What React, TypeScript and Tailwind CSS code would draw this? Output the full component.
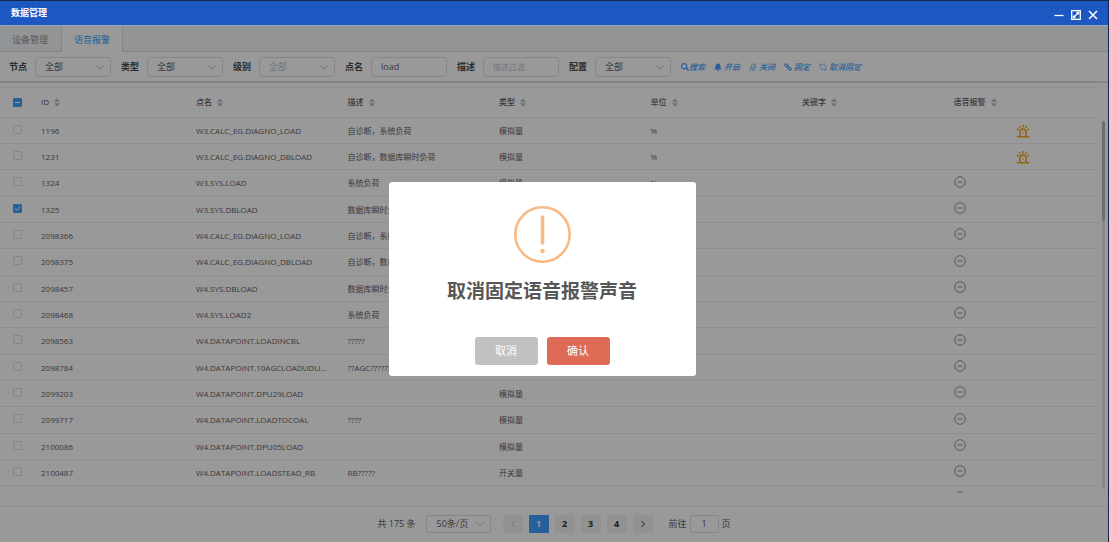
import { useState } from "react";
import { FaSearch, FaBell } from "react-icons/fa";
import { clsx } from "clsx";

const columns = ["ID", "点名", "描述", "类型", "单位", "关键字", "语音报警"];

const rows = [
  { id: "1196", name: "W3.CALC_EG.DIAGNO_LOAD", desc: "自诊断，系统负荷", type: "模拟量", unit: "%", alarm: true },
  { id: "1231", name: "W3.CALC_EG.DIAGNO_DBLOAD", desc: "自诊断，数据库瞬时负荷", type: "模拟量", unit: "%", alarm: true },
  { id: "1324", name: "W3.SYS.LOAD", desc: "系统负荷", type: "模拟量", unit: "%", alarm: false },
  { id: "1325", name: "W3.SYS.DBLOAD", desc: "数据库瞬时负荷", type: "", unit: "", alarm: false },
  { id: "2098366", name: "W4.CALC_EG.DIAGNO_LOAD", desc: "自诊断，系统负荷", type: "", unit: "", alarm: false },
  { id: "2098375", name: "W4.CALC_EG.DIAGNO_DBLOAD", desc: "自诊断，数据库瞬时负荷", type: "", unit: "", alarm: false },
  { id: "2098457", name: "W4.SYS.DBLOAD", desc: "数据库瞬时负荷", type: "", unit: "", alarm: false },
  { id: "2098468", name: "W4.SYS.LOAD2", desc: "系统负荷", type: "", unit: "", alarm: false },
  { id: "2098563", name: "W4.DATAPOINT.LOADINCBL", desc: "?????", type: "", unit: "", alarm: false },
  { id: "2098784", name: "W4.DATAPOINT.10AGCLOADUDLIMIT", desc: "??AGC??????", type: "", unit: "", alarm: false },
  { id: "2099203", name: "W4.DATAPOINT.DPU29LOAD", desc: "", type: "模拟量", unit: "", alarm: false },
  { id: "2099717", name: "W4.DATAPOINT.LOADTOCOAL", desc: "????", type: "模拟量", unit: "", alarm: false },
  { id: "2100086", name: "W4.DATAPOINT.DPU05LOAD", desc: "", type: "模拟量", unit: "", alarm: false },
  { id: "2100487", name: "W4.DATAPOINT.LOADSTEAD_RB", desc: "RB?????", type: "开关量", unit: "", alarm: false },
];

function Chevron() {
  return (
    <svg viewBox="0 0 8 8" className="pointer-events-none absolute top-1/2 right-[7px] size-2 -translate-y-1/2 fill-none stroke-[#c0c4cc]">
      <path d="M0.5 2.5 4 6 7.5 2.5" />
    </svg>
  );
}

function SortIcon() {
  return (
    <svg viewBox="0 0 6 9" className="h-[9px] w-[6px] fill-[#b4b8c0]">
      <path d="M0 3.8 3 0.6 6 3.8ZM0 5.2 3 8.4 6 5.2Z" />
    </svg>
  );
}

function SirenIcon() {
  return (
    <svg viewBox="0 0 14 14" className="mx-auto size-[14px] fill-none stroke-[#f5a31c]" strokeWidth="1.5">
      <path d="M0.8 12.8H13.2M4 12.6V8a3 3 0 0 1 6 0v4.6M7 1v2.4M3.4 2l.9 1.8M10.6 2l-.9 1.8M0.8 5.2l1.9 1M13.2 5.2l-1.9 1" />
      <path d="M7 8.2v1.4" strokeWidth="1" />
    </svg>
  );
}

function MinusCircle() {
  return (
    <svg viewBox="0 0 12 12" className="size-[12px] fill-none stroke-[#909399]">
      <circle cx="6" cy="6" r="5.3" />
      <path d="M3.5 6h5" />
    </svg>
  );
}

function BellOff() {
  return (
    <svg viewBox="0 0 10 10" className="size-2 fill-none stroke-current">
      <path d="M1 9.5 9.4 0.8M2.2 6.8 3 3.6A2.6 2.6 0 0 1 6.8 1.6M8 3.8 7.4 7.6H4M4.2 9.2h2.2M1 7.6h1.4" />
    </svg>
  );
}

function Chain() {
  return (
    <svg viewBox="0 0 10 10" className="size-2 fill-none stroke-current" strokeWidth="1.4">
      <rect x="-2.2" y="-1.4" width="4.4" height="2.8" rx="1.3" transform="translate(3 3) rotate(45)" />
      <rect x="-2.2" y="-1.4" width="4.4" height="2.8" rx="1.3" transform="translate(7 7) rotate(45)" />
    </svg>
  );
}

function Unlink() {
  return (
    <svg viewBox="0 0 10 10" className="size-2 fill-none stroke-current">
      <path d="M5 2.8 3.8 1.6a1.5 1.5 0 0 0-2.2 2.2L3 5.2M5 7.2l1.3 1.3a1.5 1.5 0 0 0 2.2-2.2L7.2 5M6.5 2.6V1M7.4 3.5H9M3.5 7.4V9M2.6 6.5H1" />
    </svg>
  );
}

function Filter({ id, label, muted }: { id: string; label: string; muted?: boolean }) {
  return (
    <div className="flex items-center gap-2">
      <label htmlFor={id} className="text-[9px] font-bold text-[#484a4e]">{label}</label>
      <div className="relative">
        <select
          id={id}
          className={clsx(
            "block h-5 w-[76px] appearance-none rounded-[3px] border border-[#dcdfe6] bg-white px-[9px] text-[9px]",
            muted ? "text-[#c0c4cc]" : "text-[#606266]",
          )}
        >
          <option>全部</option>
        </select>
        <Chevron />
      </div>
    </div>
  );
}

export default function App() {
  const [checked, setChecked] = useState<string[]>(["1325"]);
  const [name, setName] = useState("load");
  const [page, setPage] = useState(1);
  const [open, setOpen] = useState(true);

  const toggle = (id: string) =>
    setChecked(checked.includes(id) ? checked.filter((c) => c !== id) : [...checked, id]);

  return (
    <div className="flex h-screen flex-col overflow-hidden border-t border-r border-[#14264d] bg-white font-['Open_Sans','Noto_Sans_CJK_SC',sans-serif] text-[8px] text-[#606266]">
      {/* Title bar */}
      <header className="flex h-[25px] shrink-0 items-center justify-between border-b border-[#9da9c4] bg-[#1d57c2] pr-[10px] pl-[11px] text-white">
        <h1 className="text-[9px] font-bold">数据管理</h1>
        <div className="flex items-center gap-[7px] pt-1">
          <button type="button" aria-label="最小化">
            <svg viewBox="0 0 10 10" className="size-[10px] fill-none stroke-current" strokeWidth="1.3">
              <path d="M0.5 5.5h9" />
            </svg>
          </button>
          <button type="button" aria-label="最大化">
            <svg viewBox="0 0 10 10" className="size-[10px] fill-none stroke-current" strokeWidth="1.3">
              <path d="M0.7 0.7h8.6v8.6H0.7ZM5.5 2.5h2v2M7.5 2.5l-5 5M2.5 5.5v2h2" />
            </svg>
          </button>
          <button type="button" aria-label="关闭窗口">
            <svg viewBox="0 0 10 10" className="size-[10px] fill-none stroke-current" strokeWidth="1.5">
              <path d="M1 1l8 8M9 1l-8 8" />
            </svg>
          </button>
        </div>
      </header>

      <main className="relative flex min-h-0 flex-1 flex-col">
        {/* Tabs */}
        <nav className="flex h-[26px] shrink-0 border-b border-[#dcdfe6] bg-[#f5f7fa] text-[9px]">
          <button type="button" className="pt-[2px] pr-[13px] pl-3 text-[#909399]">设备管理</button>
          <button type="button" className="-mb-px border-x border-[#dcdfe6] bg-white px-3 pt-px text-[#409eff]">语音报警</button>
        </nav>

        {/* Filters */}
        <form className="flex h-[31px] shrink-0 items-center gap-[10px] border-b-2 border-[#dedede] pl-[9px]" onSubmit={(e) => e.preventDefault()}>
          <Filter id="node" label="节点" />
          <Filter id="type" label="类型" />
          <Filter id="level" label="级别" muted />
          <div className="flex items-center gap-2">
            <label htmlFor="name" className="text-[9px] font-bold text-[#484a4e]">点名</label>
            <input
              id="name"
              value={name}
              onChange={(e) => setName(e.target.value)}
              className="h-5 w-[76px] rounded-[3px] border border-[#dcdfe6] px-[9px] text-[9px]"
            />
          </div>
          <div className="flex items-center gap-2">
            <label htmlFor="desc" className="text-[9px] font-bold text-[#484a4e]">描述</label>
            <input
              id="desc"
              placeholder="描述过滤"
              className="h-5 w-[76px] rounded-[3px] border border-[#dcdfe6] px-[9px] text-[8px] placeholder:text-[#c0c4cc]"
            />
          </div>
          <Filter id="config" label="配置" />
          <div className="flex items-center gap-[9px] text-[8px] font-medium text-[#409eff] italic">
            <button type="submit" className="flex items-center"><FaSearch className="size-2" />搜索</button>
            <button type="button" className="flex items-center gap-[2px]"><FaBell className="size-2" />开启</button>
            <button type="button" className="flex items-center gap-[2px]"><BellOff />关闭</button>
            <button type="button" className="flex items-center gap-[2px]"><Chain />固定</button>
            <button type="button" className="flex items-center gap-[2px]" onClick={() => setOpen(true)}><Unlink />取消固定</button>
          </div>
        </form>

        {/* Table */}
        <div className="mt-1 flex min-h-0 flex-1">
          <div className="min-w-0 flex-1 overflow-hidden">
            <table className="w-full table-fixed border-collapse text-left">
              <colgroup>
                <col className="w-[35px]" />
                <col className="w-[155px]" />
                <col span={6} />
              </colgroup>
              <thead>
                <tr className="h-[30px] border-y border-[#ebeef5]">
                  <th className="pl-[13px]">
                    <button type="button" aria-label="全选" className="flex size-[9px] items-center justify-center rounded-[1px] bg-[#409eff]">
                      <span className="h-px w-[5px] bg-white" />
                    </button>
                  </th>
                  {columns.map((col) => (
                    <th key={col} className="px-[6px] pb-px font-medium text-[#606266]">
                      <span className="flex items-center gap-[5px]">{col}<SortIcon /></span>
                    </th>
                  ))}
                </tr>
              </thead>
              <tbody>
                {rows.map((row) => (
                  <tr key={row.id} className="h-[26px] border-b border-[#ebeef5] nth-[3n]:h-[27px]">
                    <td className="pb-[3px] pl-[13px]">
                      <span className="relative block size-[9px]">
                        <input
                          type="checkbox"
                          aria-label={row.id}
                          checked={checked.includes(row.id)}
                          onChange={() => toggle(row.id)}
                          className={clsx(
                            "block size-[9px] appearance-none rounded-[1px] border",
                            checked.includes(row.id) ? "border-[#409eff] bg-[#409eff]" : "border-[#dcdfe6] bg-white",
                          )}
                        />
                        {checked.includes(row.id) && (
                          <svg viewBox="0 0 9 9" className="pointer-events-none absolute inset-0 size-[9px] fill-none stroke-white">
                            <path d="M2 4.5 4 6.3 7.2 2.8" />
                          </svg>
                        )}
                      </span>
                    </td>
                    <td className="px-[6px]">{row.id}</td>
                    <td className="truncate pr-3 pl-[6px]">{row.name}</td>
                    <td className="truncate px-[6px]">{row.desc}</td>
                    <td className="px-[6px]">{row.type}</td>
                    <td className="px-[6px]">{row.unit}</td>
                    <td className="px-[6px]" />
                    <td className={clsx("px-[6px]", !row.alarm && "pb-[3px]")}>{row.alarm ? <SirenIcon /> : <MinusCircle />}</td>
                  </tr>
                ))}
                <tr className="h-[26px]">
                  <td colSpan={7} />
                  <td className="px-[6px] pb-[3px]"><MinusCircle /></td>
                </tr>
              </tbody>
            </table>
          </div>
          <div className="w-[9px] shrink-0 pt-[34px] pl-[3px]">
            <div className="h-[368px] w-[3px] rounded bg-[#e4e5e8]">
              <div className="h-[100px] rounded bg-[#b6b9c6]" />
            </div>
          </div>
        </div>

        {/* Pagination */}
        <footer className="mt-[13px] flex h-9 shrink-0 items-center justify-center border-t border-[#ebeef5] pb-[2px] text-[9px]">
          <span>共 175 条</span>
          <div className="relative ml-[10px]">
            <select aria-label="每页条数" className="block h-[18px] w-[65px] appearance-none rounded-[2px] border border-[#dcdfe6] px-[10px]">
              <option>50条/页</option>
            </select>
            <Chevron />
          </div>
          <div className="ml-3 flex gap-[6px] font-bold text-[#303133]">
            <button type="button" aria-label="上一页" className="flex h-[18px] w-5 items-center justify-center rounded-[1px] bg-[#f4f4f5] text-[#c0c4cc]">
              <svg viewBox="0 0 8 8" className="size-2 fill-none stroke-current"><path d="M5.5 1 2.5 4 5.5 7" /></svg>
            </button>
            {[1, 2, 3, 4].map((n) => (
              <button
                key={n}
                type="button"
                onClick={() => setPage(n)}
                className={clsx("h-[18px] w-5 rounded-[1px]", page === n ? "bg-[#409eff] text-white" : "bg-[#f4f4f5]")}
              >
                {n}
              </button>
            ))}
            <button type="button" aria-label="下一页" className="flex h-[18px] w-5 items-center justify-center rounded-[1px] bg-[#f4f4f5]">
              <svg viewBox="0 0 8 8" className="size-2 fill-none stroke-current"><path d="M2.5 1 5.5 4 2.5 7" /></svg>
            </button>
          </div>
          <label className="ml-4 flex items-center gap-[3px]">
            前往
            <input defaultValue="1" className="h-[18px] w-[29px] rounded-[2px] border border-[#dcdfe6] text-center" />
            页
          </label>
        </footer>

        {/* Confirm dialog */}
        {open && (
          <div className="absolute inset-0 flex items-center justify-center bg-black/40 pr-6 pb-[10px]">
            <div role="dialog" aria-labelledby="dialog-title" className="flex w-[307px] flex-col items-center rounded-[3px] bg-white pt-6 pb-[11px]">
              <svg viewBox="0 0 57 57" className="size-[57px] fill-none stroke-[#f8bb86]">
                <circle cx="28.5" cy="28.5" r="27.2" strokeWidth="2.6" />
                <path d="M28.5 11v26" strokeWidth="3.6" strokeLinecap="round" />
                <circle cx="28.5" cy="45" r="2.3" className="fill-[#f8bb86] stroke-none" />
              </svg>
              <h2 id="dialog-title" className="mt-[14px] text-[19px] leading-[28px] font-bold text-[#575757]">取消固定语音报警声音</h2>
              <div className="mt-8 flex gap-[9px] text-[11px] text-white">
                <button type="button" onClick={() => setOpen(false)} className="h-7 w-[63px] rounded-[3px] bg-[#c1c1c1]">取消</button>
                <button type="button" onClick={() => setOpen(false)} className="h-7 w-[63px] rounded-[3px] bg-[#dd6b55]">确认</button>
              </div>
            </div>
          </div>
        )}
      </main>
    </div>
  );
}
